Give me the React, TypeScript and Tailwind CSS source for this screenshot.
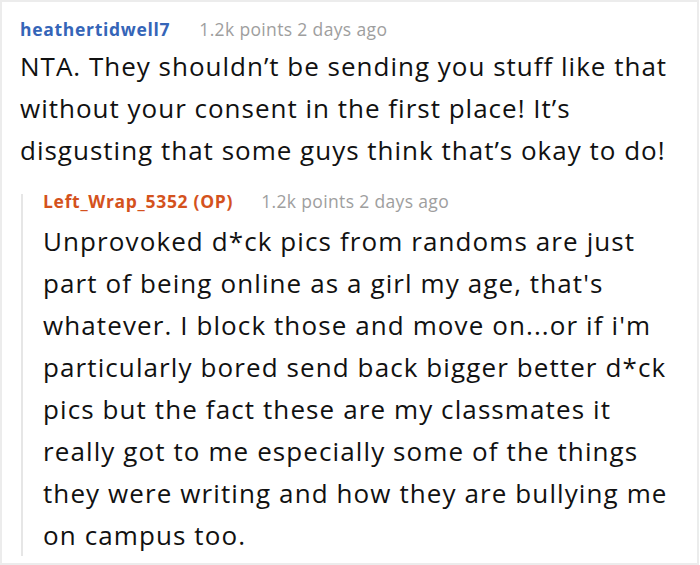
export default function App() {
  return (
    <div className="h-[565px] w-[699px] overflow-hidden border-2 border-[#ececec] bg-white font-['Open_Sans',sans-serif]">
      <div className="pl-[18px] pr-2 pt-[14px]">
        <div className="flex items-baseline leading-[26px]">
          <span className="text-[17.5px] font-bold tracking-[0.7px] text-[#3565b8]">heathertidwell7</span>
          <span className="ml-[29px] text-[17.5px] tracking-[0.35px] text-[#9e9e9e]">1.2k points 2 days ago</span>
        </div>
        <p className="mt-[3px] w-[670px] text-[26px] leading-[42px] tracking-[1px] text-[#111]">
          NTA. They shouldn’t be sending you stuff like that without your consent in the first place! It’s disgusting that some guys think that’s okay to do!
        </p>
      </div>
      <div className="ml-[19px] mt-[23px] border-l-2 border-[#e6e6e6] pl-[20px]">
        <div className="flex items-baseline leading-[14px]">
          <span className="text-[17.5px] font-bold tracking-[0.7px] text-[#d4521d]">Left_Wrap_5352 (OP)</span>
          <span className="ml-[28px] text-[17.5px] tracking-[0.35px] text-[#9e9e9e]">1.2k points 2 days ago</span>
        </div>
        <p className="mt-[12px] w-[640px] text-[26px] leading-[42px] tracking-[1.1px] text-[#111]">
          Unprovoked d*ck pics from randoms are just part of being online as a girl my age, that's whatever. I block those and move on...or if i'm particularly bored send back bigger better d*ck pics but the fact these are my classmates it really got to me especially some of the things they were writing and how they are bullying me on campus too.
        </p>
      </div>
    </div>
  );
}
